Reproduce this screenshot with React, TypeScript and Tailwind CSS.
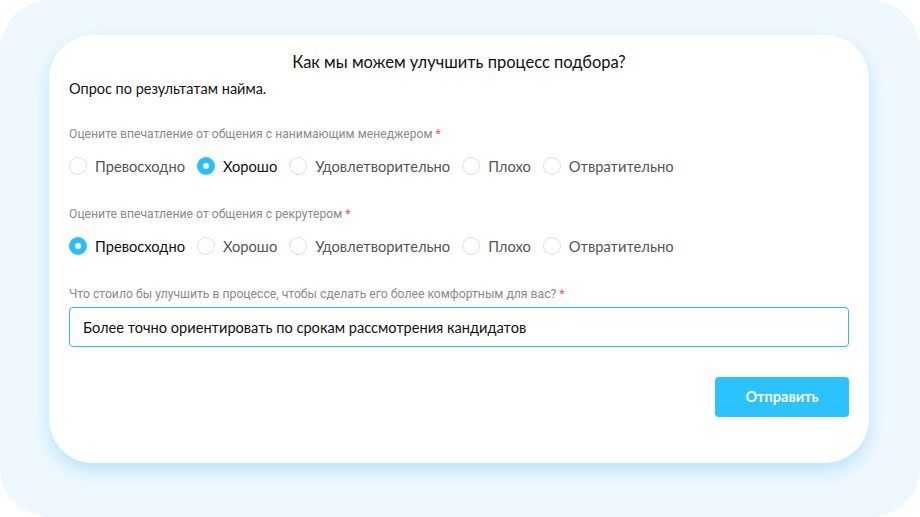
import React, { useState } from 'react';

const OPTIONS = ['Превосходно', 'Хорошо', 'Удовлетворительно', 'Плохо', 'Отвратительно'];

const RadioGroup: React.FC<{ value: string; onChange: (v: string) => void }> = ({ value, onChange }) => (
  <div className="flex items-center h-[18px]">
    {OPTIONS.map((opt) => {
      const active = value === opt;
      return (
        <button key={opt} onClick={() => onChange(opt)} className="flex items-center mr-[12px]">
          <span
            className={`w-[18px] h-[18px] rounded-full flex items-center justify-center ${
              active ? 'bg-[#29bffb]' : 'border border-[#dedede] bg-white'
            }`}
          >
            {active && <span className="w-[6px] h-[6px] rounded-full bg-white" />}
          </span>
          <span className={`ml-[8px] text-[14.7px] ${active ? 'text-[#111]' : 'text-[#555]'}`}>{opt}</span>
        </button>
      );
    })}
  </div>
);

const Label: React.FC<{ children: React.ReactNode }> = ({ children }) => (
  <div className="text-[12.2px] text-[#8a8a8a] leading-[16px]" style={{ fontFamily: 'Roboto, sans-serif' }}>
    {children} <span className="text-[#f0506e]">*</span>
  </div>
);

export default function App() {
  const [manager, setManager] = useState('Хорошо');
  const [recruiter, setRecruiter] = useState('Превосходно');
  const [text, setText] = useState('Более точно ориентировать по срокам рассмотрения кандидатов');

  return (
    <div className="w-[920px] h-[517px] bg-white" style={{ fontFamily: 'Lato, "Open Sans", sans-serif' }}>
      <div className="w-full h-full rounded-[50px] bg-[#eff8fe] pt-[35px] pl-[49px] pr-[51px]">
        <div className="h-[428px] bg-white rounded-[44px] shadow-[0_8px_18px_rgba(120,205,250,0.45)] px-[20px] pt-[17px]">
          <h1 className="text-center text-[16.5px] text-[#111] leading-[20px]">Как мы можем улучшить процесс подбора?</h1>
          <p className="mt-[8px] text-[14.5px] text-[#111] leading-[18px]">Опрос по результатам найма.</p>

          <div className="mt-[28px]">
            <Label>Оцените впечатление от общения с нанимающим менеджером</Label>
            <div className="mt-[15px]">
              <RadioGroup value={manager} onChange={setManager} />
            </div>
          </div>

          <div className="mt-[31px]">
            <Label>Оцените впечатление от общения с рекрутером</Label>
            <div className="mt-[15px]">
              <RadioGroup value={recruiter} onChange={setRecruiter} />
            </div>
          </div>

          <div className="mt-[31px]">
            <Label>Что стоило бы улучшить в процессе, чтобы сделать его более комфортным для вас?</Label>
            <input
              value={text}
              onChange={(e) => setText(e.target.value)}
              className="mt-[5px] w-full h-[40px] border border-[#2bbdf8] rounded-[4px] px-[13px] text-[14.6px] text-[#111] outline-none"
            />
          </div>

          <div className="flex justify-end mt-[30px]">
            <button className="w-[134px] h-[40px] rounded-[4px] bg-[#2bc2fd] text-white text-[14.5px] font-bold">
              Отправить
            </button>
          </div>
        </div>
      </div>
    </div>
  );
}
